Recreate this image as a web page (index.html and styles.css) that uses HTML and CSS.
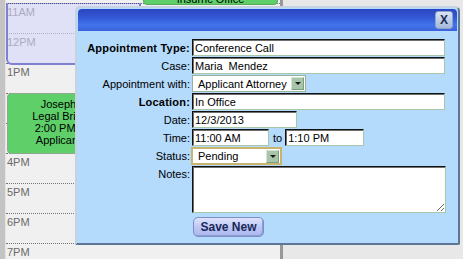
FILE: index.html
```html
<!DOCTYPE html>
<html>
<head>
<meta charset="utf-8">
<link rel="stylesheet" href="styles.css">
</head>
<body>
<div class="screen">
  <div class="strip"></div>
  <div class="day">
    <div class="slots">
      <div class="slot slot-top"></div>
      <div class="slot">11AM</div>
      <div class="slot">12PM</div>
      <div class="slot">1PM</div>
      <div class="slot">2PM</div>
      <div class="slot">3PM</div>
      <div class="slot">4PM</div>
      <div class="slot">5PM</div>
      <div class="slot">6PM</div>
      <div class="slot">7PM</div>
    </div>
    <div class="sel"></div>
    <div class="ev ev-top">Insurnc Office</div>
    <div class="ev ev-joseph">Joseph<br>Legal Brief<br>2:00 PM -<br>Applicant</div>
  </div>
  <div class="rest"></div>

  <div class="dialog">
    <div class="titlebar"><button class="close">X</button></div>
    <div class="form">
      <label class="lbl req">Appointment Type:</label>
      <div class="field"><input class="inp wide" type="text" value="Conference Call"></div>

      <label class="lbl">Case:</label>
      <div class="field"><input class="inp wide" type="text" value="Maria  Mendez"></div>

      <label class="lbl">Appointment with:</label>
      <div class="field"><div class="select sel-with"><span class="sel-text">Applicant Attorney</span><span class="sel-btn"><span class="arrow"></span></span></div></div>

      <label class="lbl req">Location:</label>
      <div class="field"><input class="inp wide" type="text" value="In Office"></div>

      <label class="lbl">Date:</label>
      <div class="field"><input class="inp date" type="text" value="12/3/2013"></div>

      <label class="lbl">Time:</label>
      <div class="field"><input class="inp time1" type="text" value="11:00 AM"><span class="to">to</span><input class="inp time2" type="text" value="1:10 PM"></div>

      <label class="lbl">Status:</label>
      <div class="field"><div class="select sel-status"><span class="sel-text">Pending</span><span class="sel-btn"><span class="arrow"></span></span></div></div>

      <label class="lbl notes-lbl">Notes:</label>
      <div class="field"><textarea class="inp notes"></textarea></div>

      <div></div>
      <div class="field"><button class="save">Save New</button></div>
    </div>
  </div>
</div>
</body>
</html>
```

FILE: styles.css
```css
html, body {
  margin: 0;
  padding: 0;
  background: #ebebeb;
  overflow: hidden;
}
.screen {
  position: relative;
  display: flex;
  width: 463px;
  height: 259px;
  overflow: hidden;
  font-family: "Liberation Sans", Arial, sans-serif;
  font-size: 11px;
}
.strip {
  width: 5px;
  background: #c4c4c4;
  border-right: 1px solid #e4e4e4;
}
.day {
  position: relative;
  width: 274px;
  background: #f0f0f0;
}
.slots {
  margin-top: -27px;
}
.slot {
  box-sizing: border-box;
  height: 30px;
  border-top: 1px dotted #767676;
  padding-left: 1px;
  line-height: 16px;
  color: #6a6a6a;
}
.sel {
  position: absolute;
  left: 0;
  top: 3px;
  width: 135px;
  height: 62px;
  box-sizing: border-box;
  background: rgba(214, 214, 250, 0.6);
  border: 2px solid #8080d0;
  border-top: 1px dotted #4a4aa4;
  border-radius: 0 0 6px 6px;
}
.ev {
  position: absolute;
  box-sizing: border-box;
  background: #5ecf69;
  border: 1px solid #8ea88e;
  border-radius: 4px;
  color: #000;
  text-align: center;
  line-height: 12px;
}
.ev-top {
  left: 137px;
  top: -15px;
  width: 135px;
  height: 20px;
  padding-top: 7px;
  border-color: #5aa85a;
}
.ev-joseph {
  left: 1px;
  top: 93px;
  width: 135px;
  height: 61px;
  padding: 4px 32px 0 0;
}
.rest {
  flex: 1;
  background: #e8e8e8;
  border-left: 3px solid #989898;
}

.dialog {
  position: absolute;
  left: 75px;
  top: 6px;
  width: 385px;
  height: 239px;
  box-sizing: border-box;
  background: #b4dafc;
  border: 2px solid;
  border-color: #c4d2e2 #5e7696 #5e7696 #c4d2e2;
  border-radius: 5px 5px 2px 2px;
  padding: 1px;
}
.titlebar {
  height: 22px;
  border-radius: 4px 4px 0 0;
  background: linear-gradient(#2a46c0 0%, #3458d6 40%, #4274ec 72%, #3a62dc 100%);
  display: flex;
  justify-content: flex-end;
  align-items: center;
  padding-right: 4px;
}
.close {
  width: 18px;
  height: 18px;
  box-sizing: border-box;
  margin: 0;
  padding: 0;
  border: 1px solid #8ca2c8;
  border-radius: 3px;
  background: linear-gradient(#d8e4f4, #a4bada);
  font-family: "Liberation Sans", Arial, sans-serif;
  font-weight: bold;
  font-size: 12px;
  line-height: 16px;
  color: #1c2a50;
  text-align: center;
}
.form {
  display: grid;
  grid-template-columns: 112px auto;
  column-gap: 2px;
  row-gap: 1px;
  padding-top: 8px;
  align-items: center;
}
.lbl {
  text-align: right;
  color: #000;
  white-space: nowrap;
  line-height: 14px;
}
.req {
  font-weight: bold;
  letter-spacing: 0.2px;
}
.notes-lbl {
  align-self: start;
  padding-top: 1px;
}
.field {
  display: flex;
  align-items: center;
}
.inp {
  box-sizing: border-box;
  height: 17px;
  margin: 0;
  padding: 0 2px;
  border: 1px solid;
  border-color: #111 #a8c6a8 #a8c6a8 #111;
  box-shadow: inset 1px 1px 0 #707070;
  background: #fff;
  font-family: "Liberation Sans", Arial, sans-serif;
  font-size: 11px;
  color: #000;
  outline: none;
}
.wide { width: 253px; }
.date { width: 105px; }
.time1 { width: 77px; }
.time2 { width: 79px; }
.to {
  margin: 0 3px 0 4px;
  line-height: 14px;
}
.notes {
  width: 254px;
  height: 47px;
  resize: both;
}
.select {
  display: flex;
  align-items: center;
  box-sizing: border-box;
  height: 17px;
  background: #fff;
  border: 1px solid #98b498;
}
.sel-with {
  width: 114px;
}
.sel-status {
  width: 91px;
  height: 18px;
  margin-left: -1px;
  border: 2px solid #c8b46a;
}
.sel-text {
  padding-left: 5px;
  line-height: 14px;
  white-space: nowrap;
}
.sel-btn {
  margin-left: auto;
  margin-right: 1px;
  width: 13px;
  height: 13px;
  box-sizing: border-box;
  background: #a9c5a9;
  border: 1px solid;
  border-color: #d4e4d4 #7e9c7e #7e9c7e #d4e4d4;
  display: flex;
  align-items: center;
  justify-content: center;
}
.arrow {
  width: 0;
  height: 0;
  border-left: 3px solid transparent;
  border-right: 3px solid transparent;
  border-top: 3px solid #1a1a1a;
}
.save {
  margin: 3px 0 0 1px;
  width: 71px;
  height: 20px;
  padding: 0;
  box-sizing: border-box;
  border: 1px solid #7e8ec6;
  border-radius: 5px;
  background: linear-gradient(#dde2fc, #bcc6f4 55%, #aab6ee);
  box-shadow: inset -1px -1px 0 #8e9cd4;
  font-family: "Liberation Sans", Arial, sans-serif;
  font-weight: bold;
  font-size: 12px;
  color: #1a2858;
}
```
